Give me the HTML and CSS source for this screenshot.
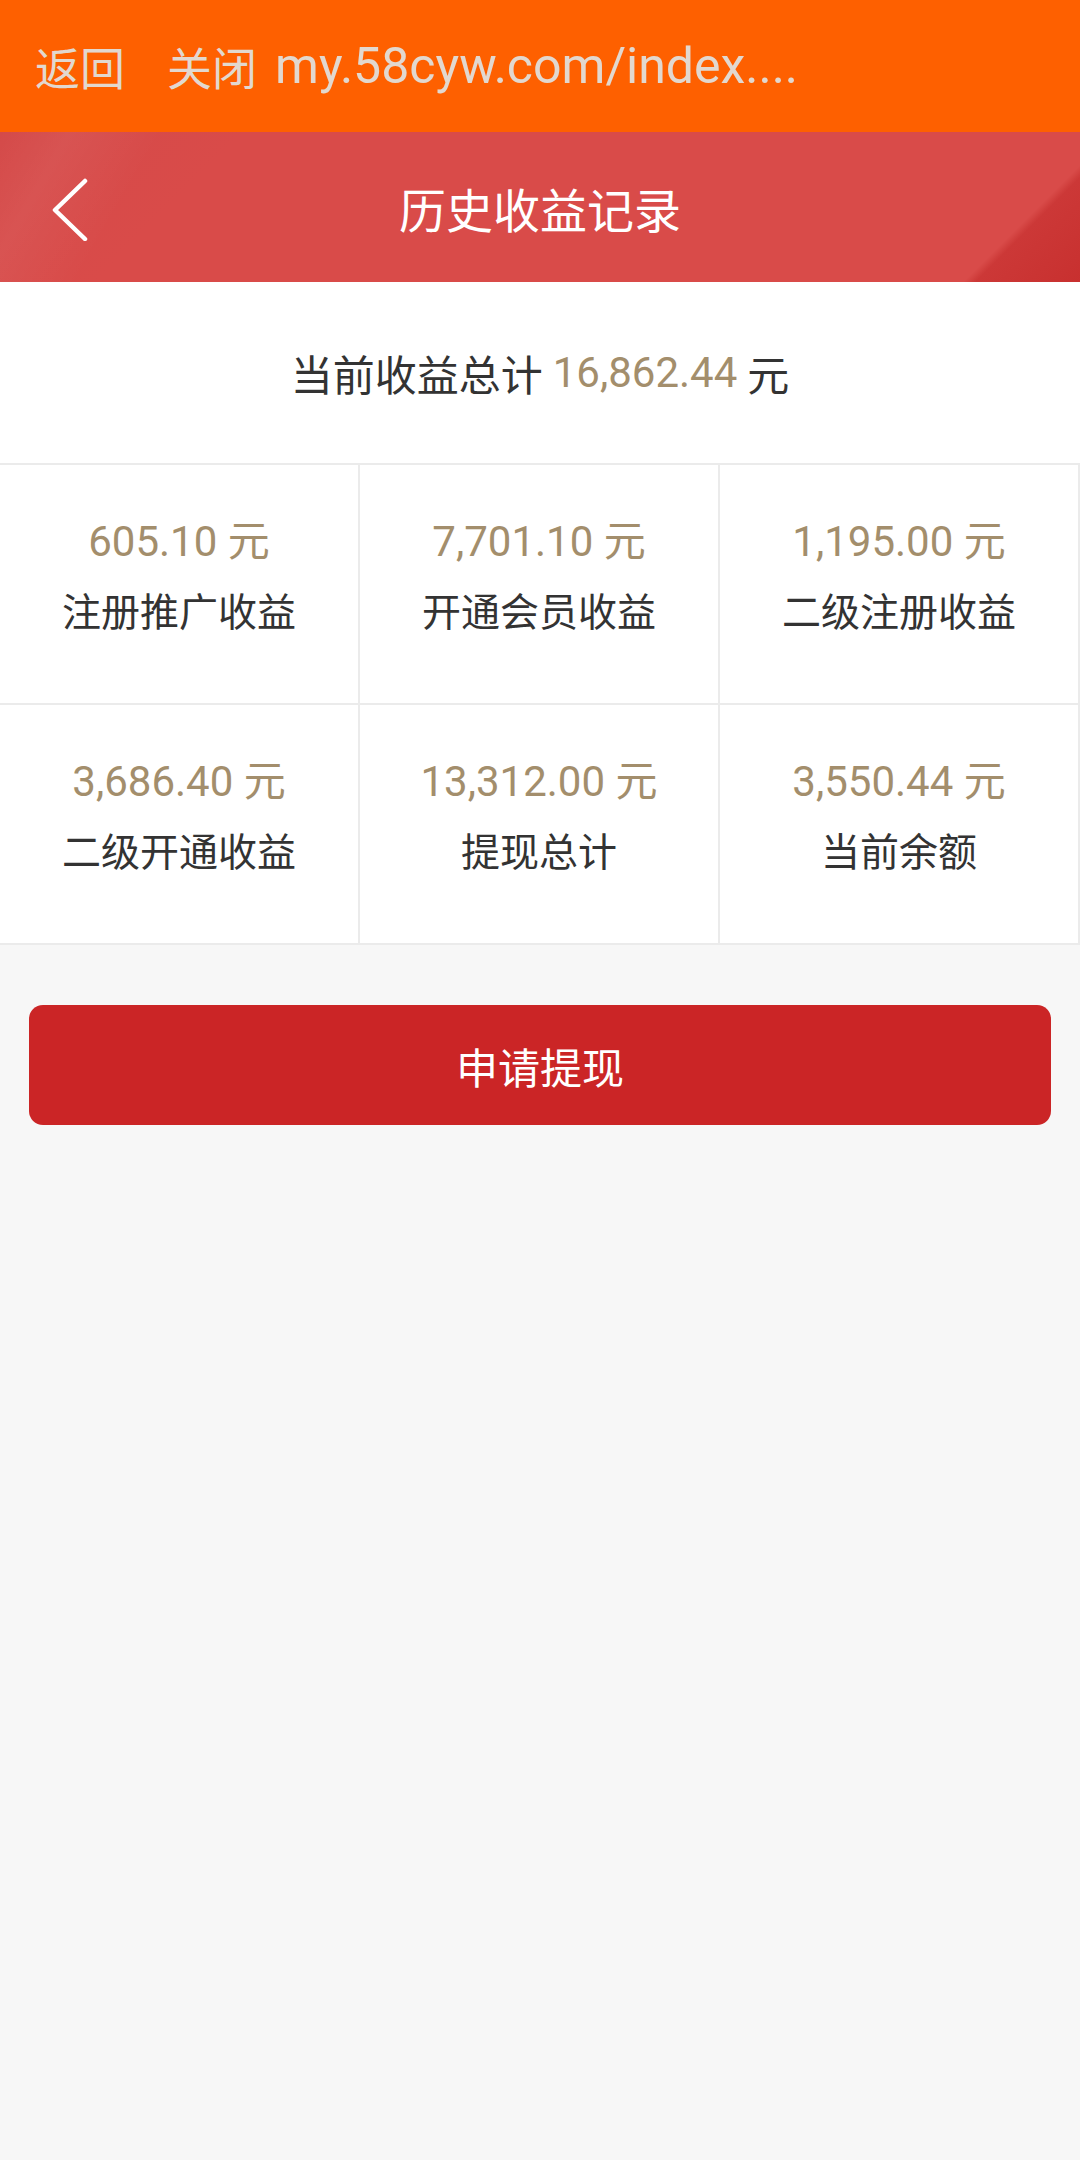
FILE: index.html
```html
<!DOCTYPE html>
<html lang="zh-CN">
<head>
    <meta charset="UTF-8">
    <meta name="viewport" content="width=device-width, initial-scale=1.0">
    <title>历史收益记录</title>
    <link rel="stylesheet" href="styles.css">
</head>
<body>
    <div class="topbar">
        <span class="back-link">返回</span>
        <span class="close-link">关闭</span>
        <span class="url">my.58cyw.com/index....</span>
    </div>
    <div class="header">
        <div class="back-icon">
            <svg width="40" height="64" viewBox="0 0 40 64">
                <polyline points="35,4 5,33 35,62" fill="none" stroke="#fff" stroke-width="4.5" stroke-linecap="round" stroke-linejoin="round"/>
            </svg>
        </div>
        <div class="title">历史收益记录</div>
        <div></div>
    </div>
    <div class="total">
        当前收益总计 <span class="money">16,862.44</span> 元
    </div>
    <div class="grid">
        <div class="cell">
            <div class="amount">605.10 元</div>
            <div class="label">注册推广收益</div>
        </div>
        <div class="cell">
            <div class="amount">7,701.10 元</div>
            <div class="label">开通会员收益</div>
        </div>
        <div class="cell">
            <div class="amount">1,195.00 元</div>
            <div class="label">二级注册收益</div>
        </div>
        <div class="cell">
            <div class="amount">3,686.40 元</div>
            <div class="label">二级开通收益</div>
        </div>
        <div class="cell">
            <div class="amount">13,312.00 元</div>
            <div class="label">提现总计</div>
        </div>
        <div class="cell">
            <div class="amount">3,550.44 元</div>
            <div class="label">当前余额</div>
        </div>
    </div>
    <button class="withdraw-button">申请提现</button>
</body>
</html>
```

FILE: styles.css
```css
body {
    font-family: Roboto, "Noto Sans CJK SC", sans-serif;
    margin: 0;
    padding: 0;
    background-color: #f7f7f7;
    min-height: 2160px;
}
.topbar {
    display: flex;
    align-items: center;
    height: 132px;
    background-color: #fe6000;
    color: #e2d8cf;
    font-size: 45px;
    padding-left: 35px;
    box-sizing: border-box;
}
.close-link {
    margin-left: 42px;
}
.url {
    margin-left: 18px;
    font-size: 50px;
}
.header {
    display: grid;
    grid-template-columns: 1fr auto 1fr;
    align-items: center;
    height: 150px;
    background:
        linear-gradient(120deg, rgba(255,255,255,0) 0%, rgba(255,255,255,0.05) 6%, rgba(255,255,255,0) 14%),
        linear-gradient(135deg, #d44a49 0%, #d94b49 20%, #d94b49 90.5%, #cc3837 91.5%, #c8302f 100%);
}
.back-icon {
    padding-left: 50px;
    padding-top: 4px;
}
.back-icon svg {
    display: block;
}
.title {
    color: #fff;
    font-size: 47px;
}
.total {
    height: 181px;
    display: flex;
    align-items: center;
    justify-content: center;
    background-color: #fff;
    color: #333;
    font-size: 42px;
    word-spacing: 2px;
}
.total .money {
    color: #a38e6c;
    margin: 0 10px;
}
.grid {
    display: grid;
    grid-template-columns: repeat(3, 1fr);
    border-top: 2px solid #ebebeb;
    background-color: #fff;
}
.cell {
    padding-top: 49px;
    height: 189px;
    border-right: 2px solid #ebebeb;
    border-bottom: 2px solid #ebebeb;
    text-align: center;
}
.amount {
    color: #a38e6c;
    font-size: 42px;
    line-height: 56px;
}
.label {
    color: #333;
    font-size: 39px;
    line-height: 56px;
    margin-top: 15px;
}
.withdraw-button {
    display: block;
    width: calc(100% - 58px);
    height: 120px;
    margin: 60px 29px 0;
    border: none;
    border-radius: 14px;
    background-color: #cb2526;
    color: #fff;
    font-family: Roboto, "Noto Sans CJK SC", sans-serif;
    font-size: 42px;
    cursor: pointer;
}
```
